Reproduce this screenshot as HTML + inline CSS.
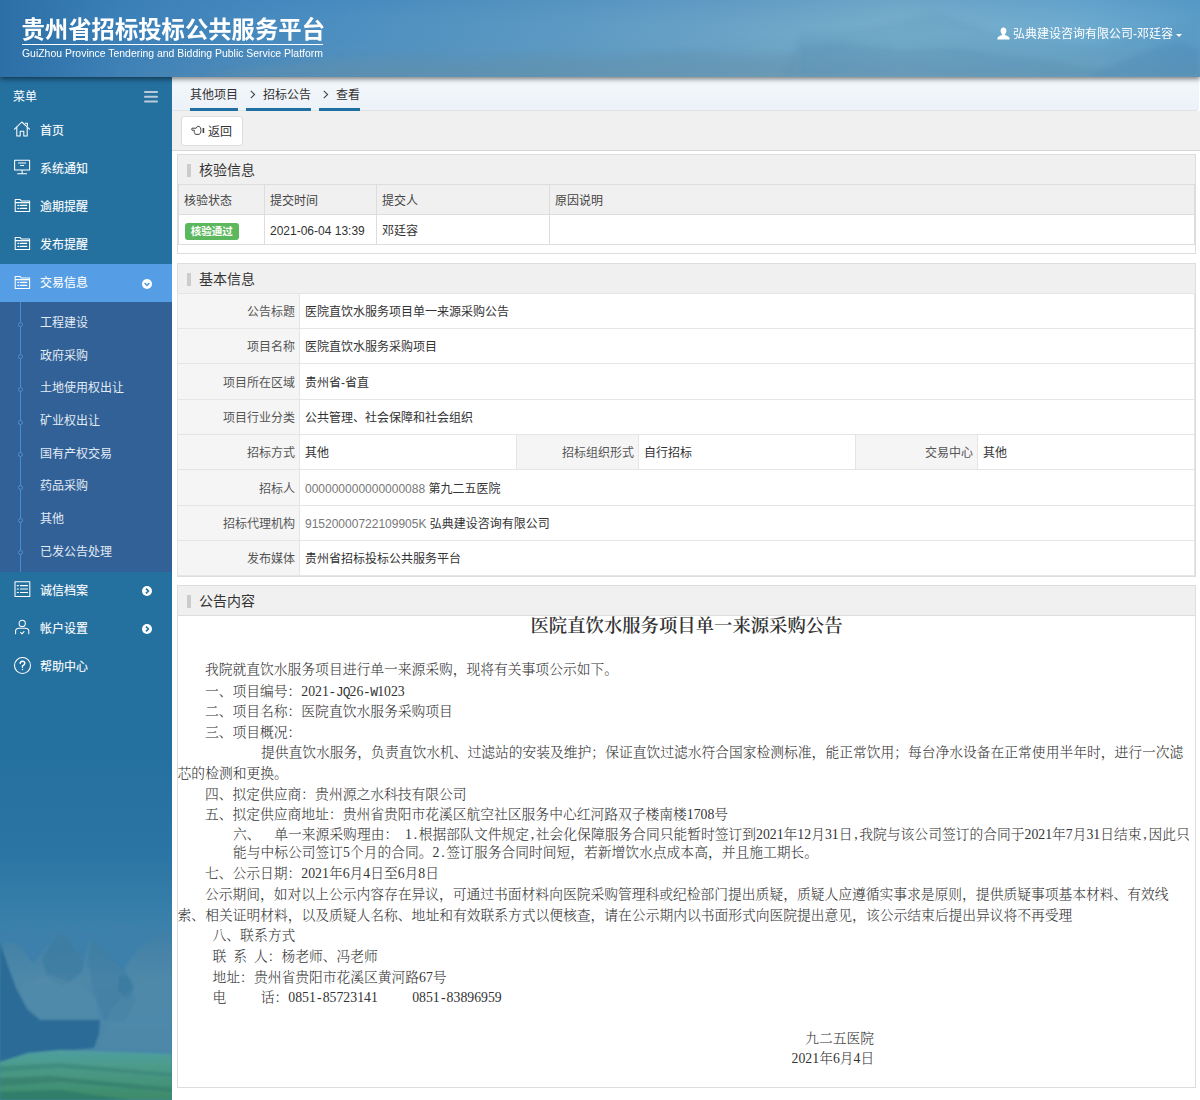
<!DOCTYPE html>
<html lang="zh-CN">
<head>
<meta charset="utf-8">
<title>贵州省招标投标公共服务平台</title>
<style>
*{box-sizing:border-box;margin:0;padding:0}
html,body{width:1200px;height:1100px;overflow:hidden;background:#fff}
body{font-family:"Liberation Sans","Noto Sans CJK SC",sans-serif;font-size:12px;color:#333;position:relative}
#hdr{position:absolute;left:0;top:0;width:1200px;height:77px;z-index:5;background:#4a8dc1;box-shadow:0 2px 5px rgba(0,0,0,.5)}
#hdr svg.hbg{position:absolute;left:0;top:0;width:1200px;height:77px}
#hdr .t1{position:absolute;left:21.5px;top:14px;font-size:23.35px;font-weight:bold;color:#fff;line-height:32px;letter-spacing:0;white-space:nowrap}
#hdr .ul{position:absolute;left:22px;top:44px;width:301px;height:1px;background:#fff}
#hdr .t2{position:absolute;left:22px;top:47px;font-size:10.45px;color:#fff;line-height:14px;white-space:nowrap}
#hdr .usr{position:absolute;left:1013px;top:26px;font-size:12px;color:#fff;line-height:16px;white-space:nowrap}
#side{position:absolute;left:0;top:77px;width:172px;height:1023px;background:#24709f;overflow:hidden}
#main{position:absolute;left:172px;top:77px;width:1028px;height:1023px;background:#fff}

/* sidebar */
#side .bg{position:absolute;left:0;top:0;width:172px;height:1023px}
#side .mh{position:absolute;left:0;top:0;width:172px;height:34px;line-height:41px;color:#fff;padding-left:13px;font-size:12px}
#side .mh i{position:absolute;left:144px;top:14px;width:14px;height:2.4px;background:#bccbd9;box-shadow:0 4.8px 0 #bccbd9,0 9.6px 0 #bccbd9;border-radius:1px}
#side .it{position:absolute;left:0;width:172px;height:38px;line-height:38px;color:#fff;padding-left:40px;font-size:12px;line-height:41px;text-shadow:0 0 1px rgba(255,255,255,.3)}
#side .it.on{background:#559de5}
#side .it svg.ic{position:absolute;left:13px;top:9px;width:19px;height:19px;fill:none;stroke:#fff;stroke-width:1.05;stroke-linecap:round;stroke-linejoin:round}
#side .it svg.ch{position:absolute;left:142px;top:14.5px;width:10px;height:10px}
#side .sub{position:absolute;left:0;top:225px;width:172px;height:270px;background:#316197}
#side .sub:before{content:"";position:absolute;left:19.5px;top:0;width:1px;height:270px;background:#458bd3}
#side .sub a{position:absolute;left:40px;height:20px;line-height:20px;color:#e3ebf4;font-size:12px;white-space:nowrap}
#side .sub a:before{content:"";position:absolute;left:-22px;top:8.5px;width:3px;height:3px;border:1px solid #4d8fd6;border-radius:50%;background:#316197}

/* main */
#bc{position:absolute;left:0;top:0;width:1027px;height:34px;background:linear-gradient(#f4f8fb,#ecf2f8);border-bottom:1px solid #dfe3e8;border-radius:0 0 4px 0}
#bc a{position:absolute;top:0;height:34px;line-height:36px;font-size:12px;color:#333;border-bottom:3px solid #1f6fa3;text-align:right;white-space:nowrap}
#bc a svg{position:absolute;left:4px;top:13px;width:6px;height:9px;fill:none;stroke:#444;stroke-width:1.1}
#tb{position:absolute;left:0;top:34px;width:1028px;height:40px;background:#f0f0f0;border-bottom:1px solid #d6d6d6}
#tb .btn{position:absolute;left:9px;top:5px;width:62px;height:30px;border:1px solid #ddd;border-radius:3px;background:#fff;line-height:30px;font-size:12px;color:#333;padding-left:26px}
#tb .btn svg{position:absolute;left:9px;top:8px;width:14px;height:11px}
.pn{position:absolute;left:5px;width:1019px;border:1px solid #ddd;background:#fff}
.pn .ph{height:30px;background:#f0f0f0;border-bottom:1px solid #ddd;line-height:31px;font-size:14px;color:#333;padding-left:21px;position:relative}
.pn .ph:before{content:"";position:absolute;left:9px;top:9px;width:4px;height:13px;background:#ccc}
table{border-collapse:collapse;table-layout:fixed}
#t1{position:absolute;left:0;top:29px;width:1017px}
#t1 td{border:1px solid #ddd;height:30px;padding:0 0 1px 5px;font-size:12px;color:#333;vertical-align:middle}
#t1 tr.h td{background:#f0f0f0;color:#444}
.lb{display:inline-block;background:#5cb85c;color:#fff;font-size:10.5px;font-weight:bold;line-height:17px;height:17px;padding:0 6.3px;border-radius:3px;vertical-align:middle;position:relative;left:0.5px;top:2px}
#t2{position:absolute;left:-1px;top:29px;width:1018px}
#t2 td{border:1px solid #e5e5e5;padding:0 0 1px 5px;font-size:12px;color:#333;vertical-align:middle}
#t2 td.l{background:#f5f5f5;text-align:right;padding:0 4px 1px 0;color:#555}
#t2 .g{color:#777}
#ct{position:absolute;left:0;top:30px;width:1017px;height:470px;font-family:"Liberation Serif","Noto Serif CJK SC",serif;font-size:13.78px;font-weight:300;color:#333;line-height:20px}
#ct h3{position:absolute;left:0;top:-0.7px;width:1017px;font-size:18.37px;font-weight:600;text-align:center;line-height:22px;height:22px;color:#333}
#ct .h{display:inline-block;width:.5em;text-align:center}
#ct .m{font-family:'Liberation Mono',monospace;font-size:13px;letter-spacing:-0.9px}
#ct p{position:absolute;white-space:nowrap;height:20px}
</style>
</head>
<body>
<div id="hdr">
<svg class="hbg" viewBox="0 0 1200 77" preserveAspectRatio="none"><defs>
<linearGradient id="hg" x1="0" x2="1" y1="0" y2="0"><stop offset="0" stop-color="#2b6fa6"/><stop offset=".1" stop-color="#3b80b8"/><stop offset=".25" stop-color="#4a8dc1"/><stop offset=".45" stop-color="#5b99c3"/><stop offset=".6" stop-color="#6aa3c7"/><stop offset=".75" stop-color="#7ab0cd"/><stop offset=".9" stop-color="#6eacd0"/><stop offset="1" stop-color="#5d9fca"/></linearGradient>
<linearGradient id="hv" x1="0" x2="0" y1="0" y2="1"><stop offset="0" stop-color="#2f74b4" stop-opacity=".18"/><stop offset=".45" stop-color="#5b93b8" stop-opacity="0"/><stop offset="1" stop-color="#6e909f" stop-opacity=".42"/></linearGradient>
<filter id="hb" x="-5%" y="-20%" width="110%" height="140%"><feGaussianBlur stdDeviation="2.5"/></filter><linearGradient id="hmg" x1="0" x2="1" y1="0" y2="0"><stop offset="0.03" stop-color="#000"/><stop offset=".3" stop-color="#fff"/></linearGradient><linearGradient id="hl" x1="0" x2="1" y1="0" y2="0"><stop offset="0" stop-color="#2b6fa6" stop-opacity="1"/><stop offset=".14" stop-color="#2b6fa6" stop-opacity="0"/></linearGradient>
</defs>
<rect width="1200" height="77" fill="url(#hg)"/><mask id="hm"><rect width="1200" height="77" fill="url(#hmg)"/></mask><rect width="1200" height="77" fill="url(#hv)" mask="url(#hm)"/>
<g filter="url(#hb)"><path d="M780 77 L800 34 L860 30 L905 20 L940 14 L965 22 L1000 34 L1050 40 L1100 46 L1140 32 L1200 20 V77 Z" fill="#4f86ad" opacity=".16"/>
<path d="M800 77 V46 L840 42 L900 50 L960 48 L1000 55 L1060 62 L1100 72 L1120 77 Z" fill="#4c83ab" opacity=".2"/>
<path d="M1085 77 L1120 62 L1160 46 L1180 41 L1200 50 V77 Z" fill="#4a86b5" opacity=".35"/>
<path d="M200 77 L260 66 L330 60 L400 57 L470 60 L540 55 L600 58 L680 52 L760 56 L800 54 V77 Z" fill="#5f8ea8" opacity=".3"/></g>
</svg>
 <div class="t1">贵州省招标投标公共服务平台</div>
 <div class="ul"></div>
 <div class="t2">GuiZhou Province Tendering and Bidding Public Service Platform</div>
 <svg style="position:absolute;left:997px;top:27px;width:13px;height:13px" viewBox="0 0 13 13"><path d="M6.5 0.4 C8.4 0.4 9.4 1.8 9.4 3.6 C9.4 5.2 8.7 6.5 7.9 7.1 V8 C9.8 8.7 12.6 9.6 12.6 11.4 V12.6 H0.4 V11.4 C0.4 9.6 3.2 8.7 5.1 8 V7.1 C4.3 6.5 3.6 5.2 3.6 3.6 C3.6 1.8 4.6 0.4 6.5 0.4 Z" fill="#fff"/></svg><div class="usr">弘典建设咨询有限公司-邓廷容</div><i style="position:absolute;left:1176px;top:34px;border:3px solid transparent;border-top-color:#fff;border-bottom:0"></i>
</div>
<div id="side">
<svg class="bg" viewBox="0 0 172 1023" preserveAspectRatio="none"><defs>
<linearGradient id="sg" x1="0" y1="0" x2="0" y2="1"><stop offset="0" stop-color="#24709f"/><stop offset="0.66" stop-color="#24709f"/><stop offset="0.76" stop-color="#2b75a4"/><stop offset="0.83" stop-color="#3a81ab"/><stop offset="1" stop-color="#3f85ab"/></linearGradient>
<linearGradient id="fg" x1="0" y1="0" x2="0" y2="1"><stop offset="0" stop-color="#4f9fa2"/><stop offset=".3" stop-color="#4d9c8c"/><stop offset="1" stop-color="#3d8a68"/></linearGradient>
<linearGradient id="m1" x1="0" y1="0" x2="0" y2="1"><stop offset="0" stop-color="#3f7fa6"/><stop offset=".35" stop-color="#4d88a9"/><stop offset="1" stop-color="#4a86a8"/></linearGradient>
<filter id="bl" x="-5%" y="-5%" width="110%" height="110%"><feGaussianBlur stdDeviation="1.3"/></filter>
</defs>
<rect width="172" height="1023" fill="url(#sg)"/>
<g filter="url(#bl)">
<polygon points="0,855 16,851 30,848 44,853 60,850 76,848 92,854 110,849 128,844 144,851 160,848 172,851 172,908 0,908" fill="#3c80aa" opacity=".85"/>
<polygon points="0,869 8,865 14,864 22,871 33,887 44,873 54,860 60,856 66,859 76,871 84,883 88,865 92,861 98,867 112,883 128,899 124,891 138,873 152,859 164,853 172,856 172,985 0,985" fill="url(#m1)"/>
<polygon points="60,857 67,861 84,883 82,895 64,909 48,901 42,883 52,865" fill="#37779f" opacity=".5"/>
<polygon points="92,862 98,867 128,899 136,923 124,945 104,943 94,915 88,885" fill="#3b7ba2" opacity=".5"/>
<polygon points="120,898 130,901 134,913 128,923 118,913" fill="#34769e" opacity=".6"/>
<polygon points="20,908 50,898 80,908 96,923 98,941 40,941 26,927" fill="#578eab" opacity=".45"/>
<polygon points="110,933 130,913 150,903 172,898 172,973 100,971" fill="#558dab" opacity=".35"/>
<polygon points="0,865 6,883 16,911 27,932 40,943 100,943 99,957 94,971 30,977 0,985" fill="#2b6c97"/>
<polygon points="0,985 28,976 60,973 172,977 172,1023 0,1023" fill="url(#fg)"/>
<polygon points="0,989 60,986 172,996 172,1000 60,991 0,995" fill="#3a877c" opacity=".7"/>
<polygon points="0,1001 50,999 172,1011 172,1015 60,1005 0,1009" fill="#347d6c" opacity=".7"/>
<polygon points="0,1015 60,1013 130,1023 0,1023" fill="#2e786a" opacity=".7"/>
</g>
</svg>
<div class="mh">菜单<i></i></div>
<div class="it" style="top:34px"><svg class="ic" viewBox="0 0 19 19"><path d="M1.5 9.2 L8.8 2 L16.5 9.2 M3.8 7.6 V16 H7.2 V11.2 H10.8 V16 H14.2 V7.6 M12.3 3.2 H14.4 V5.6"/></svg>首页</div>
<div class="it" style="top:72px"><svg class="ic" viewBox="0 0 19 19"><path d="M1.6 2.2 H16.6 V12 H1.6 Z M5.5 5 H12.7 M7.6 7.4 H10.6 M9.1 12 V15.6 M4.6 15.8 H13.6"/></svg>系统通知</div>
<div class="it" style="top:110px"><svg class="ic" viewBox="0 0 19 19"><path d="M2.2 15.4 V3.4 H7 L8.2 5 H16.6 V15.4 Z M2.2 6.6 H16.6"/><path d="M5 9.4 H5.8 M7.6 9.4 H13.6 M5 12.4 H5.8 M7.6 12.4 H13.6" stroke-width="1.3"/></svg>逾期提醒</div>
<div class="it" style="top:148px"><svg class="ic" viewBox="0 0 19 19"><path d="M2.2 15.4 V3.4 H7 L8.2 5 H16.6 V15.4 Z M2.2 6.6 H16.6"/><path d="M5 9.4 H5.8 M7.6 9.4 H13.6 M5 12.4 H5.8 M7.6 12.4 H13.6" stroke-width="1.3"/></svg>发布提醒</div>
<div class="it on" style="top:187px;line-height:39px"><svg class="ic" viewBox="0 0 19 19"><path d="M2.2 15.4 V3.4 H7 L8.2 5 H16.6 V15.4 Z M2.2 6.6 H16.6"/><path d="M5 9.4 H5.8 M7.6 9.4 H13.6 M5 12.4 H5.8 M7.6 12.4 H13.6" stroke-width="1.3"/></svg>交易信息<svg class="ch" viewBox="0 0 10 10"><circle cx="5" cy="5" r="5" fill="#fff"/><path d="M2.6 4 L5 6.4 L7.4 4" fill="none" stroke="#559de5" stroke-width="1.6"/></svg></div>
<div class="it" style="top:494px"><svg class="ic" viewBox="0 0 19 19"><path d="M2 1.8 H16.8 V16.4 H2 Z M4.2 5.6 H5.4 M7.4 5.6 H14.6 M4.2 9 H5.4 M7.4 9 H14.6 M4.2 12.4 H5.4 M7.4 12.4 H14.6"/></svg>诚信档案<svg class="ch" viewBox="0 0 10 10"><circle cx="5" cy="5" r="5" fill="#fff"/><path d="M4 2.6 L6.4 5 L4 7.4" fill="none" stroke="#24709f" stroke-width="1.6"/></svg></div>
<div class="it" style="top:532px"><svg class="ic" viewBox="0 0 19 19"><circle cx="9.2" cy="5.4" r="3.1"/><path d="M2.6 15.8 V13 Q2.6 10.4 6 10.2 H12.4 Q15.8 10.4 15.8 13 V15.8 M7.6 14.4 L9 15.8 L11 13.6"/></svg>帐户设置<svg class="ch" viewBox="0 0 10 10"><circle cx="5" cy="5" r="5" fill="#fff"/><path d="M4 2.6 L6.4 5 L4 7.4" fill="none" stroke="#24709f" stroke-width="1.6"/></svg></div>
<div class="it" style="top:570px"><svg class="ic" viewBox="0 0 19 19"><circle cx="9.5" cy="9.5" r="8"/><path d="M7.2 7.4 Q7.2 5.2 9.5 5.2 Q11.8 5.2 11.8 7.2 Q11.8 8.6 9.5 9.8 V11.2 M9.5 13.4 V13.6" stroke-width="1.4"/></svg>帮助中心</div>
<div class="sub"><a style="top:11.0px">工程建设</a><a style="top:43.7px">政府采购</a><a style="top:76.3px">土地使用权出让</a><a style="top:109.0px">矿业权出让</a><a style="top:141.6px">国有产权交易</a><a style="top:174.3px">药品采购</a><a style="top:207.0px">其他</a><a style="top:239.6px">已发公告处理</a></div>
</div>
<div id="main">
<div id="bc">
 <a style="left:18px;width:48px">其他项目</a>
 <a style="left:74px;width:65px"><svg viewBox="0 0 6 9"><path d="M0.8 0.8 L4.6 4.5 L0.8 8.2"/></svg>招标公告</a>
 <a style="left:147px;width:41px"><svg viewBox="0 0 6 9"><path d="M0.8 0.8 L4.6 4.5 L0.8 8.2"/></svg>查看</a>
</div>
<div id="tb"><div class="btn"><svg viewBox="0 0 14 11" fill="none" stroke="#444" stroke-width="1"><path d="M1 3.2 H5.2 L6.4 1.4 H8 Q10 1.8 10 5.4 Q10 9 8 9.4 H4.6 Q3.6 9.4 3.8 8.2 Q3 7.8 3.4 6.8 Q2.8 6.2 3.4 5.2 H1 Q0.4 4.2 1 3.2 Z"/><path d="M12.4 3 V8" stroke-width="1.6"/></svg>返回</div></div>

<div class="pn" style="top:77px;height:100px">
 <div class="ph">核验信息</div>
 <table id="t1"><colgroup><col style="width:86px"><col style="width:112px"><col style="width:173px"><col></colgroup>
  <tr class="h"><td>核验状态</td><td>提交时间</td><td>提交人</td><td>原因说明</td></tr>
  <tr><td><span class="lb">核验通过</span></td><td><span style="position:relative;top:1.5px">2021-06-04 13:39</span></td><td>邓廷容</td><td></td></tr>
 </table>
</div>

<div class="pn" style="top:186px;height:314px">
 <div class="ph">基本信息</div>
 <table id="t2"><colgroup><col style="width:122px"><col style="width:217px"><col style="width:122px"><col style="width:217px"><col style="width:122px"><col></colgroup>
  <tr style="height:35px"><td class="l">公告标题</td><td colspan="5">医院直饮水服务项目单一来源采购公告</td></tr>
  <tr style="height:35px"><td class="l">项目名称</td><td colspan="5">医院直饮水服务采购项目</td></tr>
  <tr style="height:36px"><td class="l">项目所在区域</td><td colspan="5">贵州省-省直</td></tr>
  <tr style="height:35px"><td class="l">项目行业分类</td><td colspan="5">公共管理、社会保障和社会组织</td></tr>
  <tr style="height:35px"><td class="l">招标方式</td><td>其他</td><td class="l">招标组织形式</td><td>自行招标</td><td class="l">交易中心</td><td>其他</td></tr>
  <tr style="height:36px"><td class="l">招标人</td><td colspan="5"><span class="g">000000000000000088</span> 第九二五医院</td></tr>
  <tr style="height:35px"><td class="l">招标代理机构</td><td colspan="5"><span class="g">91520000722109905K</span> 弘典建设咨询有限公司</td></tr>
  <tr style="height:35px"><td class="l">发布媒体</td><td colspan="5">贵州省招标投标公共服务平台</td></tr>
 </table>
</div>

<div class="pn" style="top:508px;height:503px">
 <div class="ph">公告内容</div>
 <div id="ct">
  <h3>医院直饮水服务项目单一来源采购公告</h3>
  <p style="top:44.3px;left:27.0px">我院就直饮水服务项目进行单一来源采购，现将有关事项公示如下。</p>
  <p style="top:65.6px;left:27.0px">一、项目编号：2021<span class="h">-</span><span class="m">JQ</span>26<span class="h">-</span><span class="m">W</span>1023</p>
  <p style="top:85.9px;left:27.0px">二、项目名称：医院直饮水服务采购项目</p>
  <p style="top:106.6px;left:27.0px">三、项目概况：</p>
  <p style="top:127.4px;left:83.0px">提供直饮水服务，负责直饮水机、过滤站的安装及维护；保证直饮过滤水符合国家检测标准，能正常饮用；每台净水设备在正常使用半年时，进行一次滤</p>
  <p style="top:148.1px;left:-0.4px">芯的检测和更换。</p>
  <p style="top:168.6px;left:27.0px">四、拟定供应商：贵州源之水科技有限公司</p>
  <p style="top:189.4px;left:27.0px">五、拟定供应商地址：贵州省贵阳市花溪区航空社区服务中心红河路双子楼南楼1708号</p>
  <p style="top:208.8px;left:55.0px">六、&emsp;单一来源采购理由：&ensp;1<span class="h">.</span>根据部队文件规定<span class="h">,</span>社会化保障服务合同只能暂时签订到2021年12月31日<span class="h">,</span>我院与该公司签订的合同于2021年7月31日结束<span class="h">,</span>因此只</p>
  <p style="top:227.1px;left:55.0px">能与中标公司签订5个月的合同。2<span class="h">.</span>签订服务合同时间短，若新增饮水点成本高，并且施工期长。</p>
  <p style="top:247.8px;left:27.0px">七、公示日期：2021年6月4日至6月8日</p>
  <p style="top:268.8px;left:27.0px">公示期间，如对以上公示内容存在异议，可通过书面材料向医院采购管理科或纪检部门提出质疑，质疑人应遵循实事求是原则，提供质疑事项基本材料、有效线</p>
  <p style="top:289.6px;left:-0.4px">索、相关证明材料，以及质疑人名称、地址和有效联系方式以便核查，请在公示期内以书面形式向医院提出意见，该公示结束后提出异议将不再受理</p>
  <p style="top:309.8px;left:34.6px">八、联系方式</p>
  <p style="top:331.1px;left:34.6px">联&ensp;系&ensp;人：杨老师、冯老师</p>
  <p style="top:351.6px;left:34.6px">地址：贵州省贵阳市花溪区黄河路67号</p>
  <p style="top:372.4px;left:34.6px">电&emsp;&emsp;&ensp;话：0851<span class="h">-</span>85723141&emsp;&emsp;&ensp;0851<span class="h">-</span>83896959</p>
  <p style="top:413.4px;left:627.3px">九二五医院</p>
  <p style="top:433.4px;left:613.6px">2021年6月4日</p>
 </div>
</div>
</div>
</body>
</html>
